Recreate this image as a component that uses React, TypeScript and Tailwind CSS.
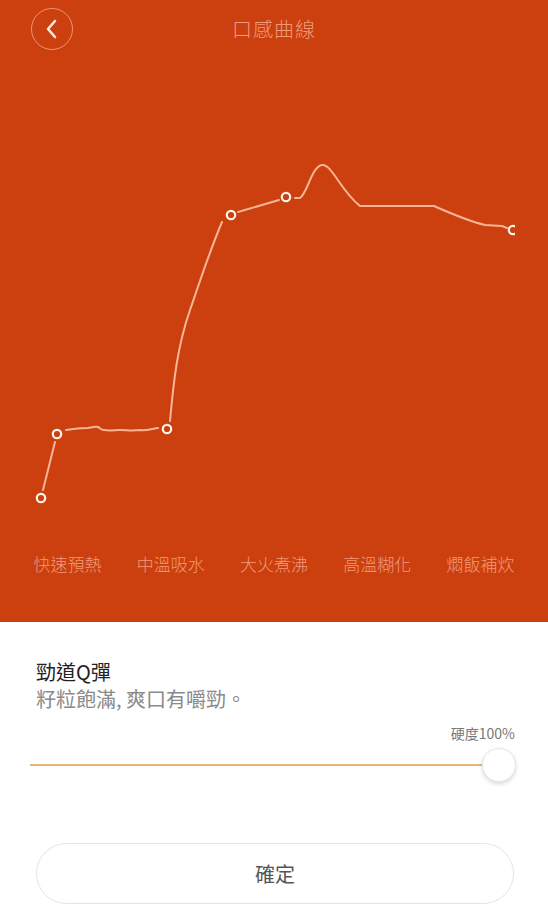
import React from "react";

const labels = ["快速預熱", "中溫吸水", "大火煮沸", "高溫糊化", "燜飯補炊"];
const points: [number, number][] = [
  [41, 498],
  [57, 434],
  [167, 429],
  [231, 215],
  [286, 197],
  [513, 230],
];

export default function App() {
  return (
    <div
      className="w-[548px] h-[915px] bg-white overflow-hidden"
      style={{ fontFamily: '"Noto Sans CJK TC", "Noto Sans", sans-serif' }}
    >
      <div className="h-[622px] bg-[#cb400e] flex flex-col">
        <div className="relative h-[58px] flex items-center justify-center">
          <div className="absolute left-[31px] top-[8px] w-[42px] h-[42px] rounded-full border border-[#ec9272] flex items-center justify-center">
            <svg width="14" height="22" viewBox="0 0 14 22" fill="none">
              <path d="M10 3 L3 11 L10 19" stroke="#fde6da" strokeWidth="2.6" strokeLinecap="round" strokeLinejoin="round" />
            </svg>
          </div>
          <span className="text-[20px] text-[#f29a78] tracking-[1px] font-light">口感曲線</span>
        </div>
        <svg width="548" height="482" viewBox="0 58 548 482" className="block">
          <defs>
            <clipPath id="cl">
              <rect x="0" y="58" width="515" height="482" />
            </clipPath>
          </defs>
          <g clipPath="url(#cl)" fill="none" stroke="#f8b596" strokeWidth="2" strokeLinecap="round" strokeLinejoin="round">
            <path d="M43 490 L55 442" />
            <path d="M66 430 C74 429 80 428 88 428 C93 427 96 426 98 427 C100 428 101 430 104 430 C110 431 115 430 120 430 C126 430 132 431 140 430 C147 431 150 429 158 428" />
            <path d="M170 421 C173 390 176 350 190 310 C198 287 210 250 222 222" />
            <path d="M238 212 L262 205 L279 200" />
            <path d="M295 198 L300 198 C307 194 312 166 322 165 C332 164 340 190 360 206 L434 206 C450 213 468 221 485 225 L502 226 L507 228" />
            {points.map(([x, y], i) => (
              <circle key={i} cx={x} cy={y} r="4.2" fill="#cb400e" stroke="#fff3ec" strokeWidth="2.2" />
            ))}
          </g>
        </svg>
        <div className="h-[48px] px-4 grid grid-cols-5 items-center">
          {labels.map((l) => (
            <span key={l} className="text-center text-[17px] text-[#f29a78] font-light">
              {l}
            </span>
          ))}
        </div>
      </div>
      <div className="px-9 pt-[36px]">
        <div className="text-[20px] leading-[28px] text-[#222]">勁道Q彈</div>
        <div className="text-[20px] leading-[26px] text-[#8a8a8a]">籽粒飽滿, 爽口有嚼勁。</div>
      </div>
      <div className="mt-[11px] pr-[33px] flex justify-end">
        <span className="text-[14px] leading-[20px] text-[#777]">硬度100%</span>
      </div>
      <div className="mt-1 ml-[30px] w-[486px] h-[36px] flex items-center">
        <div className="flex-1 h-[1.5px] bg-[#e9b37a]" />
        <div className="w-[34px] h-[34px] rounded-full bg-white border border-[#e6e6e6] shadow-[0_2px_4px_rgba(0,0,0,0.15)]" />
      </div>
      <div className="mt-[60px] ml-[36px] w-[478px] h-[61px] rounded-full border border-[#e4e4e4] flex items-center justify-center">
        <span className="text-[20px] text-[#555]">確定</span>
      </div>
    </div>
  );
}
